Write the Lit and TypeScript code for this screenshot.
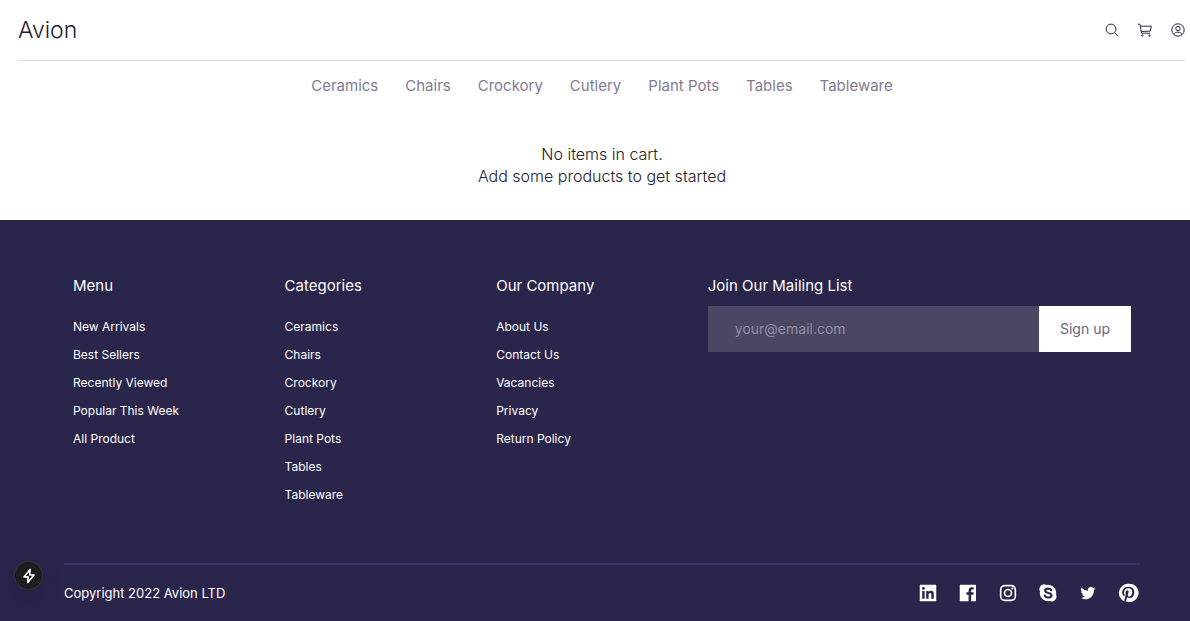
import { LitElement, html, css, svg } from "lit";
import { customElement } from "lit/decorators.js";

const CATEGORIES = ["Ceramics", "Chairs", "Crockory", "Cutlery", "Plant Pots", "Tables", "Tableware"];

const COLUMNS = [
  { title: "Menu", links: ["New Arrivals", "Best Sellers", "Recently Viewed", "Popular This Week", "All Product"] },
  { title: "Categories", links: CATEGORIES },
  { title: "Our Company", links: ["About Us", "Contact Us", "Vacancies", "Privacy", "Return Policy"] },
];

const SOCIALS = [
  {
    name: "LinkedIn",
    shape: svg`<path fill-rule="evenodd" d="M3.5 3h17a.5.5 0 0 1 .5.5v17a.5.5 0 0 1-.5.5h-17a.5.5 0 0 1-.5-.5v-17a.5.5 0 0 1 .5-.5zM5.7 9.75v8.6h2.65v-8.6zM7 5.45a1.55 1.55 0 1 0 0 3.1 1.55 1.55 0 0 0 0-3.1zM10 9.75v8.6h2.65v-4.25c0-1.15.25-2.2 1.6-2.2s1.4 1.2 1.4 2.25v4.2h2.7v-4.7c0-2.3-.5-4.1-3.2-4.1-1.3 0-2.15.7-2.5 1.4h-.05v-1.2z"/>`,
  },
  {
    name: "Facebook",
    shape: svg`<path d="M20.500 3h-17a.5.5 0 0 0-.5.5v17a.5.5 0 0 0 .5.5h9.100v-7h-2.300v-2.700h2.300v-2c0-2.300 1.400-3.600 3.500-3.600 1 0 1.800.1 2.100.1v2.400h-1.400c-1.100 0-1.350.55-1.350 1.300v1.800h2.700l-.35 2.700h-2.350v7h4.750a.5.5 0 0 0 .5-.5v-17a.5.5 0 0 0-.5-.5z"/>`,
  },
  {
    name: "Instagram",
    shape: svg`<rect x="4" y="4" width="16" height="16" rx="4.5" fill="none" stroke="currentColor" stroke-width="1.8"/><circle cx="12" cy="12" r="3.8" fill="none" stroke="currentColor" stroke-width="1.8"/><circle cx="16.8" cy="7.2" r="1.2"/>`,
  },
  {
    name: "Skype",
    shape: svg`<path d="M7.500 2.500c1 0 2 .3 2.800.8A8.900 8.900 0 0 1 20.800 13.700 5.400 5.400 0 0 1 13.700 20.800 8.900 8.900 0 0 1 3.300 10.300 5.300 5.300 0 0 1 7.500 2.500z"/><path d="M15.600 9c-.5-1.300-1.800-1.800-3.500-1.800-2 0-3.300.8-3.300 2.200 0 3.300 7 1.700 7 5 0 1.500-1.500 2.500-3.600 2.500-1.900 0-3.300-.7-3.800-2.200" fill="none" stroke="#2a254b" stroke-width="2.300" stroke-linecap="round"/>`,
  },
  {
    name: "Twitter",
    shape: svg`<path d="M19.63 7.99c.01.18.01.35.01.53 0 5.33-4.06 11.48-11.48 11.48A11.4 11.4 0 0 1 2 18.19a8.3 8.3 0 0 0 5.960-1.670 4.050 4.050 0 0 1-3.770-2.800 4.200 4.200 0 0 0 1.820-.07 4.040 4.040 0 0 1-3.230-3.960v-.05c.54.3 1.160.48 1.820.51a4.030 4.030 0 0 1-1.250-5.390 11.460 11.460 0 0 0 8.320 4.220 4.040 4.040 0 0 1 6.880-3.680 7.900 7.900 0 0 0 2.560-.97 4.030 4.030 0 0 1-1.770 2.220A8.100 8.100 0 0 0 21.670 5.920a8.700 8.700 0 0 1-2.040 2.070z" transform="translate(2 2) scale(.84)"/>`,
  },
  {
    name: "Pinterest",
    shape: svg`<path d="M12 2a10 10 0 0 0-3.900 19.200c0-.7 0-1.700.2-2.500l1.300-5.500s-.3-.6-.3-1.600c0-1.500.9-2.600 2-2.600.9 0 1.400.7 1.400 1.500 0 .9-.6 2.300-.9 3.600-.3 1 .5 1.900 1.600 1.900 1.900 0 3.200-2.400 3.200-5.300 0-2.200-1.500-3.800-4.100-3.800a4.700 4.700 0 0 0-4.900 4.700c0 .9.3 1.500.7 2 .2.2.2.3.1.5l-.2.8c-.1.3-.3.4-.5.3-1.400-.6-2-2.100-2-3.800 0-2.800 2.400-6.200 7-6.200 3.800 0 6.200 2.700 6.200 5.600 0 3.900-2.100 6.700-5.300 6.700-1.100 0-2-.6-2.400-1.200l-.7 2.500c-.2.8-.6 1.600-1 2.200A10 10 0 1 0 12 2z"/>`,
  },
];

@customElement("app-root")
class AppRoot extends LitElement {
  static styles = css`
    :host {
      display: flex;
      flex-direction: column;
      min-height: 100vh;
      background: #fff;
      color: #22202e;
      font-family: Inter, "Liberation Sans", sans-serif;
      font-size: 16px;
      line-height: 22px;
    }
    * { box-sizing: border-box; }
    a { color: inherit; text-decoration: none; }
    ul { list-style: none; margin: 0; padding: 0; }
    h1, h2, p { margin: 0; font-weight: 400; }
    button { border: 0; padding: 0; background: none; color: inherit; font: inherit; cursor: pointer; }
    svg { display: block; fill: currentColor; }
    .top { padding: 0 4px 0 18px; }
    .bar {
      display: flex;
      align-items: center;
      justify-content: space-between;
      height: 61px;
      border-bottom: 1px solid #dcdcdc;
    }
    .bar .logo { font-size: 23px; font-weight: 300; line-height: 30px; }
    .tools { display: flex; gap: 17px; color: #2a254b; }
    .tools svg { width: 16px; height: 16px; fill: none; stroke: currentColor; }
    .categories {
      display: flex;
      flex-wrap: wrap;
      justify-content: center;
      gap: 8px 27px;
      padding-top: 14px;
      color: #7f7c93;
      font-size: 15px;
    }
    .empty { padding: 46px 0 33px; text-align: center; }
    .empty p { font-weight: 300; }
    .footer {
      flex: 1;
      display: flex;
      flex-direction: column;
      padding: 55px 50px 0 64px;
      background: #2a254b;
      color: #fff;
    }
    .columns {
      flex: 1;
      display: grid;
      grid-template-columns: repeat(5, 1fr);
      padding: 0 9px;
    }
    .title { font-size: 15px; line-height: 22px; }
    .links {
      display: grid;
      gap: 8px;
      padding: 20px 0 56px;
      font-size: 12px;
      line-height: 20px;
    }
    .mailing { grid-column: span 2; }
    .form { display: flex; height: 46px; margin-top: 9px; }
    .email {
      flex: 1;
      min-width: 0;
      border: 0;
      border-radius: 0;
      padding: 0 27px;
      background: #4b4664;
      color: #fff;
      font: inherit;
      font-size: 14px;
    }
    .email::placeholder { color: #8b90a3; opacity: 1; }
    .signup { width: 92px; background: #fff; color: #6a6681; font-size: 14px; }
    .legal {
      display: flex;
      align-items: center;
      justify-content: space-between;
      height: 58px;
      border-top: 2px solid #37326a;
      font-size: 13px;
    }
    .social { display: flex; gap: 18px; padding-right: 1px; }
    .social svg { width: 22px; height: 22px; }
    .devtool {
      position: fixed;
      left: 15px;
      bottom: 32px;
      display: grid;
      place-items: center;
      width: 27px;
      height: 27px;
      border-radius: 50%;
      background: #1d1d1f;
      color: #fff;
      box-shadow: 0 0 0 1px #34323c, 0 8px 24px rgba(0, 0, 0, 0.18);
    }
    .devtool svg { width: 18px; height: 18px; }
  `;

  render() {
    return html`
      <header class="top">
        <div class="bar">
          <h1 class="logo"><a href="#">Avion</a></h1>
          <div class="tools">
            <button aria-label="Search">
              <svg viewBox="0 0 16 16"><circle cx="7" cy="7" r="4.9" /><path d="M10.500 10.500L14.300 14.200" /></svg>
            </button>
            <button aria-label="Cart">
              <svg viewBox="0 0 16 16">
                <path d="M1 2.200h2l1.500 9h8.800M3.400 4.200h10.900l-1 4.900-9 .4" />
                <circle cx="5.300" cy="13.500" r=".7" /><circle cx="12.500" cy="13.500" r=".7" />
              </svg>
            </button>
            <button aria-label="Account">
              <svg viewBox="0 0 16 16">
                <circle cx="8" cy="8" r="6.200" /><circle cx="8" cy="6.500" r="2.200" />
                <path d="M4.200 12.600c.2-1.900 1.500-2.400 3.800-2.400s3.600.5 3.800 2.400" />
              </svg>
            </button>
          </div>
        </div>
        <nav aria-label="Categories">
          <ul class="categories">${CATEGORIES.map((c) => html`<li><a href="#">${c}</a></li>`)}</ul>
        </nav>
      </header>
      <main class="top">
        <div class="empty">
          <p>No items in cart.</p>
          <p>Add some products to get started</p>
        </div>
      </main>
      <footer class="footer">
        <div class="columns">
          ${COLUMNS.map(
            (col) => html`<section>
              <h2 class="title">${col.title}</h2>
              <ul class="links">${col.links.map((l) => html`<li><a href="#">${l}</a></li>`)}</ul>
            </section>`,
          )}
          <section class="mailing">
            <h2 class="title"><label for="email">Join Our Mailing List</label></h2>
            <form class="form" @submit=${(e: Event) => e.preventDefault()}>
              <input class="email" id="email" type="email" placeholder="your@email.com" />
              <button class="signup">Sign up</button>
            </form>
          </section>
        </div>
        <div class="legal">
          <p>Copyright 2022 Avion LTD</p>
          <div class="social">
            ${SOCIALS.map((s) => html`<a href="#" aria-label=${s.name}><svg viewBox="0 0 24 24">${s.shape}</svg></a>`)}
          </div>
        </div>
      </footer>
      <button class="devtool" aria-label="Developer tools">
        <svg viewBox="0 0 16 16"><path d="M9 2.200L3.500 8.800h3.800L6.900 13.800l5.600-6.700H8.700z" fill="none" stroke="currentColor" stroke-width="1.400" stroke-linejoin="round" /></svg>
      </button>
    `;
  }
}
